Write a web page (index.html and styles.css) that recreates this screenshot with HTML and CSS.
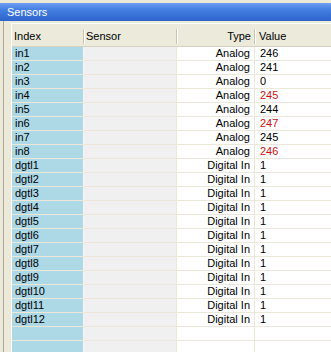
FILE: index.html
```html
<!DOCTYPE html>
<html lang="en">
<head>
  <meta charset="UTF-8" />
  <title>Sensors</title>
  <link rel="stylesheet" href="styles.css">
</head>
<body>
  <div class="window">
    <!-- Title Bar -->
    <div class="title-bar">Sensors</div>

    <div class="panel">
      <div class="grid">
        <!-- Column Headers -->
        <div class="grid-head">
          <div class="head-cell">Index</div>
          <div class="head-cell">Sensor</div>
          <div class="head-cell right">Type</div>
          <div class="head-cell last">Value</div>
        </div>

        <div class="grid-body" id="rows"></div>
      </div>
    </div>
  </div>

  <script>
    // Sensor readings (alarm values in red)
    const sensors = [
      ["in1", "Analog", "246", false],
      ["in2", "Analog", "241", false],
      ["in3", "Analog", "0", false],
      ["in4", "Analog", "245", true],
      ["in5", "Analog", "244", false],
      ["in6", "Analog", "247", true],
      ["in7", "Analog", "245", false],
      ["in8", "Analog", "246", true]
    ];
    for (let i = 1; i <= 12; i++) {
      sensors.push(["dgtl" + i, "Digital In", "1", false]);
    }
    // Two empty rows at the bottom
    sensors.push(["", "", "", false], ["", "", "", false]);

    const rowsEl = document.getElementById("rows");
    sensors.forEach(([index, type, value, alarm]) => {
      const row = document.createElement("div");
      row.className = "row";
      row.innerHTML =
        '<div class="cell index">' + index + '</div>' +
        '<div class="cell sensor"></div>' +
        '<div class="cell type">' + type + '</div>' +
        '<div class="cell value' + (alarm ? ' alarm' : '') + '">' + value + '</div>';
      rowsEl.appendChild(row);
    });
  </script>
</body>
</html>
```

FILE: styles.css
```css
/* Basic Reset & Font */
* {
  margin: 0;
  padding: 0;
  box-sizing: border-box;
}
body {
  font-family: 'Liberation Sans', Arial, sans-serif;
  font-size: 11px;
  background-color: #ece9d8;
  color: #000;
  width: 331px;
  height: 352px;
  overflow: hidden;
}

/* Window */
.window {
  padding-top: 3px;
}
.title-bar {
  height: 18px;
  line-height: 18px;
  padding-left: 7px;
  color: #fff;
  font-size: 11px;
  background: linear-gradient(to bottom, #6f9ff0 0%, #4580e2 35%, #2d63cc 100%);
}

/* Panel with left frame line */
.panel {
  margin-left: 3px;
  border-left: 1px solid #aca899;
  padding: 2px 0 0 7px;
}

/* Grid */
.grid {
  border-top: 1px solid #fff;
  border-left: 1px solid #fff;
}
.grid-head {
  display: grid;
  grid-template-columns: 72px 93px 78px 1fr;
  height: 23px;
  background-color: #ebeadb;
  border-bottom: 1px solid #d6d2c2;
}
.head-cell {
  position: relative;
  line-height: 22px;
  padding: 1px 0 0 2px;
}
.head-cell.right {
  text-align: right;
  padding-right: 4px;
}
.head-cell.last {
  padding-left: 4px;
}
/* Header separators */
.head-cell:not(.last)::after {
  content: "";
  position: absolute;
  top: 5px;
  bottom: 3px;
  right: 0;
  width: 1px;
  background-color: #c7c5b2;
  box-shadow: 1px 0 0 #fff;
}

/* Rows */
.row {
  display: grid;
  grid-template-columns: 72px 93px 78px 1fr;
  height: 14px;
  border-bottom: 1px solid #ebe8d9;
}
.cell {
  line-height: 13px;
  white-space: nowrap;
  overflow: hidden;
}
.cell.index {
  background-color: #add8e6;
  padding-left: 3px;
  border-right: 1px solid #f4f4f4;
}
.cell.sensor {
  background-color: #f0f0f0;
  border-right: 1px solid #ebe8d9;
}
.cell.type {
  background-color: #fff;
  text-align: right;
  padding-right: 4px;
  border-right: 1px solid #ebe8d9;
}
.cell.value {
  background-color: #fff;
  padding-left: 5px;
}
.cell.value.alarm {
  color: #cc1111;
}
```
